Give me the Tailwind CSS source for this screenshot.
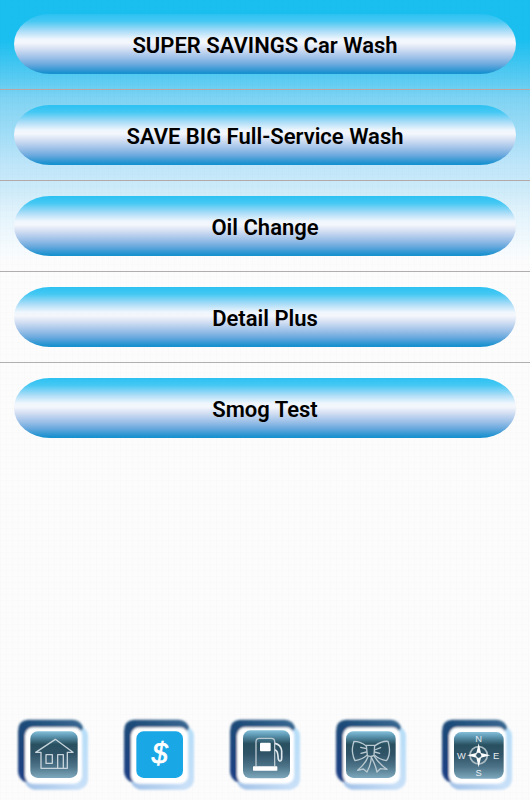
<!DOCTYPE html>
<html lang="en">
<head>
    <meta charset="UTF-8">
    <meta name="viewport" content="width=device-width, initial-scale=1">
    <title>Car Wash Specials</title>
    <script src="https://cdn.jsdelivr.net/npm/@tailwindcss/browser@4"></script>
</head>
<body class="bg-[#fcfcfc] bg-[linear-gradient(#1abff0_0px,#1abff0_40px,#55caf2_76px,#7ed3f3_98px,#c0e6fa_166px,#cdebf9_190px,#e4f4fc_215px,#f6fbfe_250px,#fcfcfc00_262px)] font-['Roboto','Liberation_Sans',sans-serif] text-black">

    <div class="min-h-screen flex flex-col bg-[repeating-linear-gradient(90deg,#00000002_0px,#00000002_1px,transparent_1px,transparent_6px),repeating-linear-gradient(#00000002_0px,#00000002_1px,transparent_1px,transparent_6px)]">

        <!-- specials -->
        <ul class="-mt-px">
            <li class="px-3.5 py-[15px] border-b border-[#bda5a3]">
                <button type="button" class="block w-full h-[60px] pt-0.5 rounded-[36px/30px] text-[22px] font-semibold bg-[linear-gradient(#2cc1f2_0%,#45c8f3_12%,#a9dcf7_28%,#eff6fd_42%,#f4f7fc_48%,#d5e0f3_58%,#9fc2e8_72%,#6aa9de_84%,#1e92d0_97%,#1590cf_100%)]">SUPER SAVINGS Car Wash</button>
            </li>
            <li class="px-3.5 py-[15px] border-b border-[#b5a9a8]">
                <button type="button" class="block w-full h-[60px] pt-0.5 rounded-[36px/30px] text-[22px] font-semibold bg-[linear-gradient(#2cc1f2_0%,#45c8f3_12%,#a9dcf7_28%,#eff6fd_42%,#f4f7fc_48%,#d5e0f3_58%,#9fc2e8_72%,#6aa9de_84%,#1e92d0_97%,#1590cf_100%)]">SAVE BIG Full-Service Wash</button>
            </li>
            <li class="px-3.5 py-[15px] border-b border-[#b0aeae]">
                <button type="button" class="block w-full h-[60px] pt-0.5 rounded-[36px/30px] text-[22px] font-semibold bg-[linear-gradient(#2cc1f2_0%,#45c8f3_12%,#a9dcf7_28%,#eff6fd_42%,#f4f7fc_48%,#d5e0f3_58%,#9fc2e8_72%,#6aa9de_84%,#1e92d0_97%,#1590cf_100%)]">Oil Change</button>
            </li>
            <li class="px-3.5 py-[15px] border-b border-[#b0aeae]">
                <button type="button" class="block w-full h-[60px] pt-0.5 rounded-[36px/30px] text-[22px] font-semibold bg-[linear-gradient(#2cc1f2_0%,#45c8f3_12%,#a9dcf7_28%,#eff6fd_42%,#f4f7fc_48%,#d5e0f3_58%,#9fc2e8_72%,#6aa9de_84%,#1e92d0_97%,#1590cf_100%)]">Detail Plus</button>
            </li>
            <li class="px-3.5 py-[15px]">
                <button type="button" class="block w-full h-[60px] pt-0.5 rounded-[36px/30px] text-[22px] font-semibold bg-[linear-gradient(#2cc1f2_0%,#45c8f3_12%,#a9dcf7_28%,#eff6fd_42%,#f4f7fc_48%,#d5e0f3_58%,#9fc2e8_72%,#6aa9de_84%,#1e92d0_97%,#1590cf_100%)]">Smog Test</button>
            </li>
        </ul>

        <!-- shared frame and tile for the tab icons -->
        <svg class="size-0" aria-hidden="true">
            <defs>
                <linearGradient id="dark" x1="0" y1="1" x2="1" y2="0">
                    <stop offset="0" stop-color="#1d3f86"/>
                    <stop offset="0.5" stop-color="#1b4a78"/>
                    <stop offset="1" stop-color="#3a6a93"/>
                </linearGradient>
                <linearGradient id="light" x1="0" y1="1" x2="1" y2="0">
                    <stop offset="0" stop-color="#9fc0e6"/>
                    <stop offset="0.45" stop-color="#c9e0f8"/>
                    <stop offset="1" stop-color="#b5def8"/>
                </linearGradient>
                <linearGradient id="tile" x1="0" y1="0" x2="0" y2="1">
                    <stop offset="0" stop-color="#84bfd8"/>
                    <stop offset="0.1" stop-color="#5e98b3"/>
                    <stop offset="0.28" stop-color="#28505f"/>
                    <stop offset="0.5" stop-color="#315468"/>
                    <stop offset="0.75" stop-color="#4c7388"/>
                    <stop offset="1" stop-color="#7ea8bd"/>
                </linearGradient>
                <filter id="soft"><feGaussianBlur stdDeviation="3"/></filter>
            </defs>
            <symbol id="frame" viewBox="0 0 318 285">
                <g filter="url(#soft)">
                    <rect x="74" y="62" width="190" height="192" rx="32" fill="url(#light)"/>
                    <path d="M84 44H218Q244 46 250 70L78 232Q56 224 54 200V78Q54 46 84 44Z" fill="url(#dark)"/>
                    <rect x="75" y="67" width="171" height="169" rx="24" fill="#fff"/>
                </g>
            </symbol>
        </svg>

        <nav class="mt-auto grid grid-cols-5">
            <a href="#home" aria-label="Home">
                <svg viewBox="0 0 318 285" class="block w-full">
                    <use href="#frame"/>
                    <rect x="91" y="79" width="142" height="140" rx="22" fill="url(#tile)"/>
                    <g fill="none" stroke="#c6d3da" stroke-width="4" stroke-linejoin="round">
                        <path d="M107 142L166 103L219 142H202V190H123V142Z"/>
                        <rect x="138" y="149" width="19" height="26"/>
                        <path d="M173 190V149H190V190"/>
                    </g>
                </svg>
            </a>
            <a href="#specials" aria-label="Specials" aria-current="page">
                <svg viewBox="0 0 318 285" class="block w-full">
                    <use href="#frame"/>
                    <rect x="91" y="79" width="140" height="140" rx="22" fill="#1aa7e6"/>
                    <text x="161" y="174" text-anchor="middle" class="font-['Liberation_Sans',sans-serif] text-[86px] italic" fill="#fff" stroke="#fff" stroke-width="2">$</text>
                </svg>
            </a>
            <a href="#fuel" aria-label="Fuel">
                <svg viewBox="0 0 318 285" class="block w-full">
                    <use href="#frame"/>
                    <rect x="93" y="76" width="141" height="144" rx="22" fill="url(#tile)"/>
                    <path d="M132 184V110Q132 100 142 100H178Q188 100 188 110V184" fill="none" stroke="#b9c8d0" stroke-width="4"/>
                    <rect x="144" y="113" width="32" height="26" rx="3" fill="#fff"/>
                    <rect x="123" y="184" width="73" height="13" rx="2" fill="#fff"/>
                    <path d="M189 115Q207 119 209 138V158Q209 169 203 168Q198 166 198 153Q197 137 189 134" fill="none" stroke="#dfe8ec" stroke-width="5"/>
                </svg>
            </a>
            <a href="#gifts" aria-label="Gifts">
                <svg viewBox="0 0 318 285" class="block w-full">
                    <use href="#frame"/>
                    <rect x="84" y="79" width="149" height="140" rx="22" fill="url(#tile)"/>
                    <g fill="none" stroke="#b9c9d1" stroke-width="4" stroke-linejoin="round" stroke-linecap="round">
                        <path d="M145 123Q128 109 108 109Q101 130 104 145Q106 158 111 167Q132 164 147 151"/>
                        <path d="M171 122Q192 107 210 109Q217 132 213 150Q210 163 205 167Q185 164 170 151"/>
                        <path d="M145 121H170L168 151Q158 157 148 152Z"/>
                        <path d="M145 131L128 127M145 141L129 145M170 135L188 128M170 141L185 145"/>
                        <path d="M150 155Q143 175 119 196L136 192L147 201Q158 181 160 158"/>
                        <path d="M160 157Q172 178 177 201L187 191L207 193Q183 176 169 154"/>
                    </g>
                </svg>
            </a>
            <a href="#directions" aria-label="Directions">
                <svg viewBox="0 0 318 285" class="block w-full">
                    <use href="#frame"/>
                    <rect x="90" y="81" width="149" height="140" rx="22" fill="url(#tile)"/>
                    <circle cx="164" cy="151" r="26" fill="none" stroke="#a9bac3" stroke-width="5"/>
                    <path d="M164 115L171 144L199 151L171 158L164 187L157 158L129 151L157 144Z" fill="#fff"/>
                    <circle cx="164" cy="151" r="9" fill="#315468" stroke="#fff" stroke-width="3"/>
                    <g class="font-['Liberation_Sans',sans-serif] text-[28px]" fill="#e6edf1" text-anchor="middle">
                        <text x="164" y="111">N</text>
                        <text x="112" y="162">W</text>
                        <text x="216" y="162">E</text>
                        <text x="164" y="213">S</text>
                    </g>
                </svg>
            </a>
        </nav>
    </div>

</body>
</html>
